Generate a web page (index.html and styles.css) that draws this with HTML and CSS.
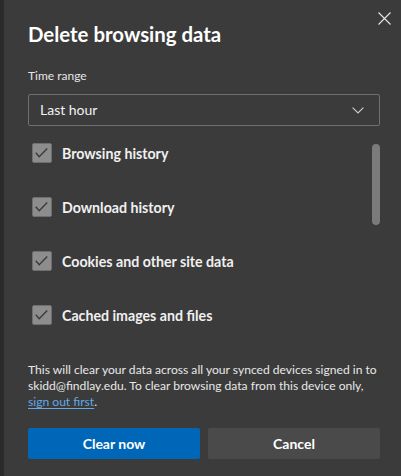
FILE: index.html
```html
<!DOCTYPE html>
<html>
<head>
<meta charset="utf-8">
<link rel="stylesheet" href="styles.css">
</head>
<body>
<div class="dialog">
  <button class="close" aria-label="Close">
    <svg width="13" height="13" viewBox="0 0 13 13"><path d="M0.5 0.5 L12.5 12.5 M12.5 0.5 L0.5 12.5" stroke="#e6e6e6" stroke-width="1.1" fill="none"/></svg>
  </button>
  <h1 class="title">Delete browsing data</h1>
  <div class="field-label">Time range</div>
  <div class="select">
    <span class="select-value">Last hour</span>
    <svg class="chevron" width="12" height="7" viewBox="0 0 12 7"><path d="M0.6 0.6 L6 6 L11.4 0.6" stroke="#cfcfcf" stroke-width="1.1" fill="none"/></svg>
  </div>
  <div class="list">
    <div class="scrollbar"></div>
    <label class="row"><span class="box"><svg width="20" height="20" viewBox="0 0 20 20"><path d="M3.8 9.8 L7.2 13.8 L15.2 5.6" stroke="#3a3a3a" stroke-width="1.4" fill="none"/></svg></span><span class="row-text">Browsing history</span></label>
    <label class="row"><span class="box"><svg width="20" height="20" viewBox="0 0 20 20"><path d="M3.8 9.8 L7.2 13.8 L15.2 5.6" stroke="#3a3a3a" stroke-width="1.4" fill="none"/></svg></span><span class="row-text">Download history</span></label>
    <label class="row"><span class="box"><svg width="20" height="20" viewBox="0 0 20 20"><path d="M3.8 9.8 L7.2 13.8 L15.2 5.6" stroke="#3a3a3a" stroke-width="1.4" fill="none"/></svg></span><span class="row-text">Cookies and other site data</span></label>
    <label class="row"><span class="box"><svg width="20" height="20" viewBox="0 0 20 20"><path d="M3.8 9.8 L7.2 13.8 L15.2 5.6" stroke="#3a3a3a" stroke-width="1.4" fill="none"/></svg></span><span class="row-text">Cached images and files</span></label>
  </div>
  <p class="note">This will clear your data across all your synced devices signed in to skidd@findlay.edu. To clear browsing data from this device only, <a class="link" href="#">sign out first</a>.</p>
  <div class="actions">
    <button class="btn btn-primary">Clear now</button>
    <button class="btn btn-secondary">Cancel</button>
  </div>
</div>
</body>
</html>
```
FILE: styles.css
```css
html, body {
  margin: 0;
  padding: 0;
  background: #3b3b3b;
}
body {
  font-family: Lato, "Open Sans", sans-serif;
  color: #f2f2f2;
}
.dialog {
  position: relative;
  box-sizing: border-box;
  width: 401px;
  height: 476px;
  border-left: 4px solid #2b2b2b;
  padding: 22px 21px 0 24px;
  display: flex;
  flex-direction: column;
}
.close {
  position: absolute;
  top: 11px;
  right: 10px;
  width: 14px;
  height: 14px;
  padding: 0;
  border: 0;
  background: transparent;
  display: flex;
  align-items: center;
  justify-content: center;
}
.title {
  margin: 0;
  font-size: 20.4px;
  line-height: 24px;
  font-weight: 700;
  color: #ffffff;
}
.field-label {
  margin-top: 22px;
  font-size: 12px;
  line-height: 16px;
  color: #e6e6e6;
}
.select {
  margin-top: 10px;
  box-sizing: border-box;
  height: 32px;
  border: 1px solid #707070;
  border-radius: 2px;
  padding: 0 15px 0 11px;
  display: flex;
  align-items: center;
  justify-content: space-between;
}
.select-value {
  font-size: 14px;
  line-height: 30px;
  color: #f2f2f2;
}
.chevron {
  display: block;
}
.list {
  position: relative;
  display: flex;
  flex-direction: column;
}
.scrollbar {
  position: absolute;
  top: 18px;
  right: 0;
  width: 8px;
  height: 81px;
  border-radius: 4px;
  background: #7b7b7b;
}
.row {
  height: 54px;
  display: flex;
  align-items: center;
  gap: 10px;
  padding-left: 4px;
}
.box {
  box-sizing: border-box;
  width: 20px;
  height: 20px;
  border: 1px solid #6f6f6f;
  border-radius: 2px;
  background: #8d8d8d;
  display: flex;
  align-items: center;
  justify-content: center;
  overflow: hidden;
}
.box svg {
  display: block;
  flex: none;
}
.row-text {
  font-size: 14.2px;
  line-height: 18px;
  font-weight: 700;
  color: #f0f0f0;
  padding-top: 1px;
}
.note {
  margin: 20px 0 0;
  font-size: 12.1px;
  line-height: 16px;
  color: #e8e8e8;
}
.link {
  color: #62a9e6;
  text-decoration: underline;
  text-underline-offset: 2px;
}
.actions {
  margin-top: 18px;
  display: flex;
  gap: 8px;
}
.btn {
  flex: 1;
  height: 31px;
  border: 0;
  border-radius: 2px;
  font-family: Lato, "Open Sans", sans-serif;
  font-size: 14px;
  font-weight: 700;
  line-height: 31px;
  padding: 0;
  color: #ffffff;
}
.btn-primary {
  background: #0067b8;
}
.btn-secondary {
  background: #4a4a4a;
}
```
